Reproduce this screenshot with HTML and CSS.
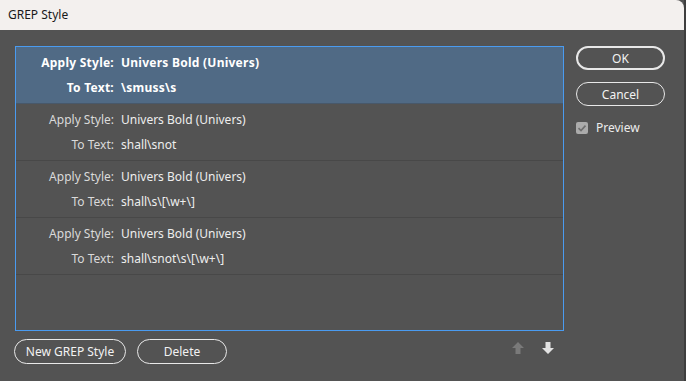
FILE: index.html
```html
<!DOCTYPE html>
<html>
<head>
<meta charset="utf-8">
<link rel="stylesheet" href="styles.css">
</head>
<body>
<div class="window">
  <div class="titlebar">GREP Style</div>
  <div class="content">
    <div class="left">
      <div class="list">
        <div class="row selected">
          <span class="lbl">Apply Style:</span><span class="val">Univers Bold (Univers)</span>
          <span class="lbl">To Text:</span><span class="val">\smuss\s</span>
        </div>
        <div class="row">
          <span class="lbl">Apply Style:</span><span class="val">Univers Bold (Univers)</span>
          <span class="lbl">To Text:</span><span class="val">shall\snot</span>
        </div>
        <div class="row">
          <span class="lbl">Apply Style:</span><span class="val">Univers Bold (Univers)</span>
          <span class="lbl">To Text:</span><span class="val">shall\s\[\w+\]</span>
        </div>
        <div class="row">
          <span class="lbl">Apply Style:</span><span class="val">Univers Bold (Univers)</span>
          <span class="lbl">To Text:</span><span class="val">shall\snot\s\[\w+\]</span>
        </div>
      </div>
      <div class="bottom">
        <button class="btn wide">New GREP Style</button>
        <button class="btn">Delete</button>
        <div class="arrows">
          <svg class="arrow up" width="12" height="13" viewBox="0 0 12 13"><path d="M6 0 L12 6 L8.5 6 L8.5 12 L3.5 12 L3.5 6 L0 6 Z" fill="#7a7a7a"/></svg>
          <svg class="arrow down" width="12" height="13" viewBox="0 0 12 13"><path d="M3.5 0 L8.5 0 L8.5 6 L12 6 L6 12 L0 6 L3.5 6 Z" fill="#e2e2e2"/></svg>
        </div>
      </div>
    </div>
    <div class="right">
      <button class="btn side default">OK</button>
      <button class="btn side">Cancel</button>
      <label class="check">
        <span class="box"><svg width="12" height="12" viewBox="0 0 12 12"><path d="M2.5 6.2 L5 8.6 L9.5 3.6" stroke="#6e6e6e" stroke-width="1.6" fill="none"/></svg></span>
        <span>Preview</span>
      </label>
    </div>
  </div>
</div>
</body>
</html>
```
FILE: styles.css
```css
html, body {
  margin: 0;
  padding: 0;
}
body {
  width: 686px;
  height: 381px;
  overflow: hidden;
  background: #535353;
  font-family: "Noto Sans", "Open Sans", sans-serif;
  font-size: 12px;
}
.window {
  width: 684px;
  height: 381px;
  border-right: 2px solid #3e3e3e;
  background: #535353;
}
.titlebar {
  height: 30px;
  line-height: 29px;
  padding-left: 8px;
  background: #f3f0ee;
  color: #1a1a1a;
  font-size: 12px;
  border-top-right-radius: 8px;
}
.content {
  display: flex;
  padding: 16px 0 0 15px;
}
.left {
  width: 549px;
}
.list {
  box-sizing: border-box;
  width: 549px;
  height: 285px;
  border: 1px solid #4a9bf0;
  background: #535353;
}
.row {
  display: grid;
  grid-template-columns: 98px auto;
  column-gap: 7px;
  height: 57px;
  box-sizing: border-box;
  padding: 3px 0;
  border-bottom: 1px solid #484848;
  line-height: 25px;
  color: #e4e4e4;
}
.row .lbl {
  text-align: right;
  color: #dadada;
}
.row .val {
  color: #eeeeee;
}
.row.selected {
  background: #506a85;
  font-weight: bold;
  letter-spacing: 0.25px;
  border-bottom: 1px solid #48586a;
}
.row.selected .lbl,
.row.selected .val {
  color: #ffffff;
}
.bottom {
  display: flex;
  align-items: center;
  margin-top: 8px;
  margin-left: -1px;
}
.btn {
  box-sizing: border-box;
  height: 25px;
  border: 1.5px solid #e8e8e8;
  border-radius: 13px;
  background: transparent;
  color: #f2f2f2;
  font-family: "Noto Sans", "Open Sans", sans-serif;
  font-size: 12px;
  padding: 0;
  width: 90px;
}
.btn.wide {
  width: 112px;
  margin-right: 11px;
}
.arrows {
  align-self: flex-start;
  margin-top: 3px;
  margin-left: auto;
  margin-right: 10px;
  display: flex;
  gap: 18px;
}
.arrow {
  display: block;
}
.right {
  margin-left: 12px;
  display: flex;
  flex-direction: column;
  width: 89px;
}
.btn.side {
  width: 89px;
  height: 24px;
  margin-bottom: 12px;
}
.btn.default {
  border-width: 2px;
}
.check {
  display: flex;
  align-items: center;
  gap: 8px;
  color: #ececec;
  margin-top: 1px;
}
.box {
  width: 12px;
  height: 12px;
  border-radius: 2px;
  background: #ababab;
  display: block;
}
.box svg {
  display: block;
}
```
